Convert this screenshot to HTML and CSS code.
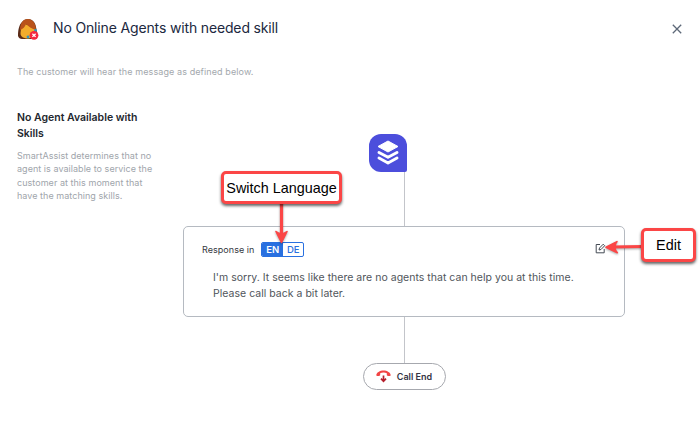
FILE: index.html
```html
<!DOCTYPE html>
<html lang="en">
<head>
<meta charset="utf-8">
<title>No Online Agents with needed skill</title>
<link rel="stylesheet" href="styles.css">
</head>
<body>
<header class="header">
  <svg class="agent" width="22" height="23" viewBox="0 0 22 23">
    <path d="M1 18C1 12 2 7 5 4C8 0 14 0 17 4C19 7 20 12 20 18L15 21H5Q2 21 1 18Z" fill="#5b2c18"/>
    <path d="M3.5 16C3.5 11 5 7 8 6L18 10C19 17 16 20.5 11 20.5C7 20.5 4 19 3.5 16Z" fill="#f3ad2d"/>
    <path d="M3 12C3 4 7 1 11 1C16 1 19 6 19 12C15 11 12 9 9 6C8 9 6 11 3 12Z" fill="#b9531b"/>
    <circle cx="11" cy="19" r="1.4" fill="#3395bd"/><circle cx="18.5" cy="12.5" r="1.4" fill="#3395bd"/>
    <circle cx="17" cy="17.3" r="4.4" fill="#f5283f"/>
    <path d="M15.4 15.7l3.2 3.2M18.6 15.7l-3.2 3.2" stroke="#fff" stroke-width="1.3"/>
  </svg>
  <h1 class="title">No Online Agents with needed skill</h1>
  <svg class="close" width="10" height="10" viewBox="0 0 10 10"><path d="M.8.8l8.4 8.4M9.2.8L.8 9.2" stroke="#5d6878" stroke-width="1.3"/></svg>
</header>
<p class="intro">The customer will hear the message as defined below.</p>
<main class="content">
  <aside class="side">
    <h2 class="side-title">No Agent Available with<br>Skills</h2>
    <p class="side-text">SmartAssist determines that no<br>agent is available to service the<br>customer at this moment that<br>have the matching skills.</p>
  </aside>
  <section class="flow">
    <div class="node">
      <svg width="24" height="28" viewBox="0 0 24 28" fill="#fff">
        <path d="M12 2L22 7.5L12 13L2 7.5Z" stroke="#fff" stroke-linejoin="round"/>
        <path d="M3 13.4L12 18.3L21 13.4M3 19L12 24L21 19" fill="none" stroke="#fff" stroke-width="2.9" stroke-linecap="round" stroke-linejoin="round"/>
      </svg>
    </div>
    <div class="line line-top"></div>
    <div class="card">
      <div class="card-head">
        <span class="label">Response in</span>
        <div class="langs"><span class="lang active">EN</span><span class="lang">DE</span></div>
        <svg class="edit" width="11" height="11" viewBox="0 0 11 11" fill="none" stroke="#444b54"><path d="M5 1.5H1.2V9.8H9.2V6"/><path d="M4 7l.5-2L8.2 1.2l1.5 1.5L6 6.5Z"/></svg>
      </div>
      <p class="message">I'm sorry. It seems like there are no agents that can help you at this time.<br>Please call back a bit later.</p>
    </div>
    <div class="line line-bottom"></div>
    <div class="pill">
      <svg width="15" height="13" viewBox="0 0 15 13"><path d="M.3 5.5C.2 2.5 4 .5 7.5.5S14.8 2.5 14.7 5.5C13.5 6.4 12 6.2 10.8 5.2V3.2C9 2.4 6 2.4 4.2 3.2V5.2C3 6.2 1.5 6.4.3 5.5Z" fill="#f24444"/><path d="M7.5 5.6v6M5 8.6l2.5 2.7L10 8.6" fill="none" stroke="#b51f2c" stroke-width="1.7"/></svg>
      <span>Call End</span>
    </div>
  </section>
</main>
<svg class="arrow arrow-down" width="20" height="44" viewBox="0 0 20 44"><path d="M8.5 0V36" stroke="#fb4646" stroke-width="3.2"/><path d="M8.5 40.5L3 29.5Q8.5 34 14 29.5Z" fill="#fb4646" stroke="#fb4646" stroke-width="1.6" stroke-linejoin="round"/></svg>
<svg class="arrow arrow-left" width="40" height="18" viewBox="0 0 40 18"><path d="M39 8.5L8 9" stroke="#fb4646" stroke-width="3.2"/><path d="M2 9.3L13 3.6Q8.5 9 13.3 14.7Z" fill="#fb4646" stroke="#fb4646" stroke-width="1.6" stroke-linejoin="round"/></svg>
<div class="callout callout-lang">Switch Language</div>
<div class="callout callout-edit">Edit</div>
</body>
</html>
```

FILE: styles.css
```css
* { box-sizing: border-box; }
body { margin: 0; width: 700px; height: 421px; overflow: hidden; background: #fff; font-family: Inter, sans-serif; color: #23272e; position: relative; }
h1, h2, p { margin: 0; }
.header { display: flex; align-items: center; height: 57px; padding: 0 18px 0 17px; }
.agent { margin: 2px 14px 0 0; }
.title { font-size: 14px; font-weight: 400; line-height: 20px; letter-spacing: -.15px; color: #202840; flex: 1; padding-bottom: 2px; }
.intro { height: 54px; padding: 8px 17px 0; font-size: 9px; line-height: 14px; letter-spacing: .1px; color: #a3a8ad; }
.content { display: flex; }
.side { width: 183px; padding: 0 0 0 17px; margin-top: -1px; white-space: nowrap; }
.side-title { font-size: 10.5px; line-height: 16px; font-weight: 600; }
.side-text { margin-top: 7px; font-size: 9px; line-height: 13.3px; letter-spacing: .04px; color: #a0a5ab; }
.flow { width: 442px; display: flex; flex-direction: column; align-items: center; padding-top: 23px; }
.node { width: 38px; height: 38px; margin-right: 32px; background: #4c4edc; border-radius: 12px 12px 2px 12px; display: flex; align-items: center; justify-content: center; }
.line { width: 1px; background: #c3c5ca; }
.line-top { height: 54px; }
.line-bottom { height: 46px; }
.card { width: 442px; height: 91px; border: 1px solid #b5bac1; border-radius: 5px; padding: 14px 18px 0; }
.card-head { display: flex; align-items: center; height: 17px; }
.label { font-size: 9px; letter-spacing: .05px; white-space: nowrap; color: #34383e; }
.langs { display: flex; width: 43px; height: 15px; margin-left: 7px; border: 1px solid #2970e0; border-radius: 2px; overflow: hidden; }
.lang { flex: 1; font-size: 9.5px; line-height: 14px; font-weight: 500; color: #2970e0; text-align: center; }
.lang.active { color: #fff; background: #2970e0; font-weight: 600; }
.edit { margin: -2px 0 0 auto; }
.message { padding: 12px 0 0 11px; font-size: 10.5px; line-height: 16px; letter-spacing: .02px; color: #50555b; white-space: nowrap; }
.pill { width: 83px; height: 27px; border: 1px solid #a6a8ae; border-radius: 14px; display: flex; align-items: center; justify-content: center; gap: 6px; font-size: 9px; font-weight: 600; color: #343344; white-space: nowrap; }
.arrow { position: absolute; filter: drop-shadow(0 1px 1px rgba(0,0,0,.35)); }
.arrow-down { left: 273px; top: 202px; }
.arrow-left { left: 604px; top: 238px; }
.callout { position: absolute; display: flex; align-items: center; justify-content: center; background: #fff; border: 3px solid #fb4646; border-radius: 5px; box-shadow: 0 2px 3px rgba(0,0,0,.6); font: 14.4px "Liberation Sans", Arial, sans-serif; color: #000; white-space: nowrap; }
.callout-lang { left: 221px; top: 171px; width: 121px; height: 33px; }
.callout-edit { left: 641px; top: 228px; width: 55px; height: 34px; }
```
